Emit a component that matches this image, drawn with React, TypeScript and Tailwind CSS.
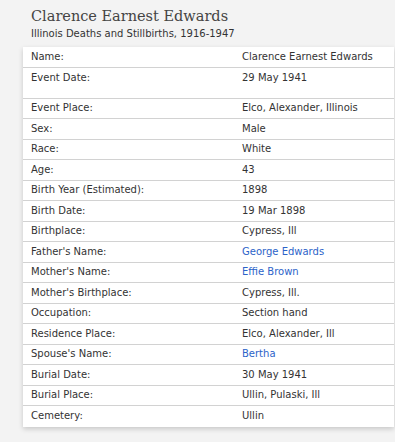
const rows: { label: string; value: string; link?: boolean; tall?: boolean }[] = [
  { label: "Name:", value: "Clarence Earnest Edwards" },
  { label: "Event Date:", value: "29 May 1941", tall: true },
  { label: "Event Place:", value: "Elco, Alexander, Illinois" },
  { label: "Sex:", value: "Male" },
  { label: "Race:", value: "White" },
  { label: "Age:", value: "43" },
  { label: "Birth Year (Estimated):", value: "1898" },
  { label: "Birth Date:", value: "19 Mar 1898" },
  { label: "Birthplace:", value: "Cypress, Ill" },
  { label: "Father's Name:", value: "George Edwards", link: true },
  { label: "Mother's Name:", value: "Effie Brown", link: true },
  { label: "Mother's Birthplace:", value: "Cypress, Ill." },
  { label: "Occupation:", value: "Section hand" },
  { label: "Residence Place:", value: "Elco, Alexander, Ill" },
  { label: "Spouse's Name:", value: "Bertha", link: true },
  { label: "Burial Date:", value: "30 May 1941" },
  { label: "Burial Place:", value: "Ullin, Pulaski, Ill" },
  { label: "Cemetery:", value: "Ullin" },
]

export default function App() {
  return (
    <div className="min-h-[442px] w-[395px] bg-[#f3f3f3] pt-[6px] font-['DejaVu_Sans',Verdana,sans-serif] text-[#333]">
      {/* Header */}
      <div className="pl-[31px]">
        <h1 className="font-['DejaVu_Serif',Georgia,serif] text-[14.5px] leading-[21px] text-[#444]">
          Clarence Earnest Edwards
        </h1>
        <p className="text-[10px] leading-[14px] text-[#333]">Illinois Deaths and Stillbirths, 1916-1947</p>
      </div>

      {/* Record table */}
      <div className="mt-[6px] ml-[23px] mr-[1px] bg-white shadow-[0_2px_5px_rgba(0,0,0,0.18)]">
        {rows.map((r, i) => (
          <div
            key={r.label}
            className={`flex text-[10px] leading-[14px] ${i < rows.length - 1 ? "border-b border-[#d2d2d2]" : ""} ${
              r.tall ? "h-[31px] pt-[3px]" : "h-[20.5px] items-center"
            }`}
          >
            <div className="w-[219px] pl-[8px]">{r.label}</div>
            <div className={r.link ? "text-[#2c63c9]" : ""}>{r.value}</div>
          </div>
        ))}
      </div>
    </div>
  )
}
